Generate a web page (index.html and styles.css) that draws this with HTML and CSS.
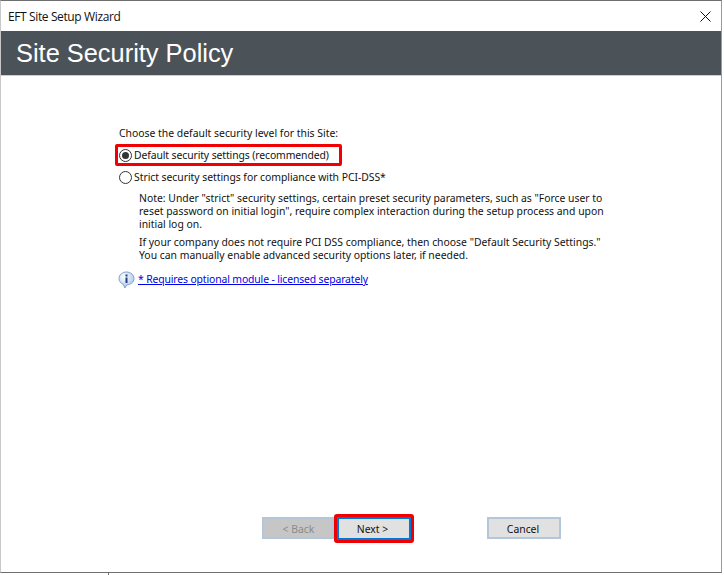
FILE: index.html
```html
<!DOCTYPE html>
<html lang="en">
<head>
<meta charset="utf-8">
<title>EFT Site Setup Wizard</title>
<link rel="stylesheet" href="styles.css">
</head>
<body>
<div class="window">
  <div class="titlebar">
    <span class="title">EFT Site Setup Wizard</span>
    <svg class="close" width="11" height="11" viewBox="0 0 11 11"><path d="M.5.5l10 10M10.5.5l-10 10" stroke="#111" stroke-width="1" fill="none"/></svg>
  </div>
  <div class="banner"><h1>Site Security Policy</h1></div>
  <main class="content">
    <p class="prompt">Choose the default security level for this Site:</p>
    <div class="option selected">
      <span class="radio checked"></span><span class="tight">Default security settings (recommended)</span>
    </div>
    <div class="option">
      <span class="radio"></span><span>Strict security settings for compliance with PCI-DSS*</span>
    </div>
    <div class="notes">
      <p>Note: Under "strict" security settings, certain preset security parameters, such as "Force user to<br>reset password on initial login", require complex interaction during the setup process and upon<br>initial log on.</p>
      <p>If your company does not require PCI DSS compliance, then choose "Default Security Settings."<br>You can manually enable advanced security options later, if needed.</p>
    </div>
    <div class="info">
      <svg class="info-icon" width="17" height="18" viewBox="0 0 17 18">
        <defs><radialGradient id="bubble" cx="35%" cy="30%" r="75%"><stop offset="0" stop-color="#ffffff"/><stop offset="1" stop-color="#a9c6ea"/></radialGradient></defs>
        <path d="M8.5 1C4.400 1 1 3.800 1 7.500c0 2.800 1.900 5 4.500 5.900L6.800 17l2-3.100c3.900-.2 7.200-2.900 7.200-6.400C16 3.800 12.600 1 8.500 1z" fill="url(#bubble)" stroke="#7f9fc6"/>
        <rect x="7.500" y="6.500" width="2" height="5.500" fill="#1d3f86"/>
        <rect x="7.500" y="3.500" width="2" height="2" fill="#1d3f86"/>
      </svg>
      <a class="info-link" href="#">* Requires optional module - licensed separately</a>
    </div>
  </main>
  <footer class="actions">
    <button class="btn btn-back" disabled>&lt; Back</button>
    <button class="btn btn-next">Next &gt;</button>
    <button class="btn btn-cancel">Cancel</button>
  </footer>
</div>
<div class="underlay"><span class="tick"></span></div>
</body>
</html>
```

FILE: styles.css
```css
html, body {
  margin: 0;
  padding: 0;
  background: #fff;
}
body {
  width: 724px;
  height: 575px;
  overflow: hidden;
  font-family: "Noto Sans", "DejaVu Sans", sans-serif;
  font-size: 10.4px;
  color: #111;
}
.window {
  box-sizing: border-box;
  width: 722px;
  height: 573px;
  border-top: 1px solid #6e6e6e;
  border-bottom: 1px solid #6e6e6e;
  border-right: 1px solid #9a9a9a;
  border-left: 1px solid #c8c8c8;
  display: flex;
  flex-direction: column;
  background: #fff;
}
.titlebar {
  height: 30px;
  flex: none;
  display: flex;
  align-items: center;
  justify-content: space-between;
  padding: 0 10px 0 7px;
}
.title {
  font-family: "Open Sans", "Noto Sans", sans-serif;
  font-size: 12px;
  letter-spacing: -0.38px;
  color: #111;
}
.close {
  display: block;
}
.banner {
  height: 45px;
  flex: none;
  box-sizing: border-box;
  background: #4b5359;
  border-bottom: 1px solid #c9ced2;
  display: flex;
  align-items: center;
  padding-left: 15px;
}
.banner h1 {
  margin: 0;
  font-family: "Liberation Sans", Arial, sans-serif;
  font-weight: normal;
  font-size: 25.4px;
  color: #fff;
}
.content {
  flex: 1;
  padding: 51px 0 0 117px;
  line-height: 13px;
}
.prompt {
  margin: 0 0 4px;
  height: 13px;
  padding-left: 1px;
}
.option {
  display: flex;
  align-items: center;
  gap: 2px;
  height: 22px;
  width: 222px;
  box-sizing: border-box;
  padding-left: 1px;
  white-space: nowrap;
  letter-spacing: -0.04px;
}
.option .tight {
  letter-spacing: -0.1px;
}
.option.selected {
  width: 227px;
  margin-left: -3px;
  border: 3px solid #f00000;
  border-radius: 2px;
  padding-left: 1px;
}
.radio {
  box-sizing: border-box;
  width: 13px;
  height: 13px;
  flex: none;
  border: 1px solid #333;
  border-radius: 50%;
  background: #fff;
  display: flex;
  align-items: center;
  justify-content: center;
}
.radio.checked::before {
  content: "";
  width: 7px;
  height: 7px;
  border-radius: 50%;
  background: #333;
}
.notes {
  margin-left: 21px;
  margin-top: 4px;
  width: 490px;
  white-space: nowrap;
}
.notes p {
  margin: 0 0 5px;
}
.info {
  display: flex;
  align-items: flex-end;
  margin-top: 9px;
  height: 18px;
}
.info-icon {
  display: block;
  flex: none;
}
.info-link {
  color: #0000e6;
  text-decoration: underline;
  padding-left: 3px;
  padding-bottom: 3px;
  letter-spacing: -0.13px;
}
.actions {
  flex: none;
  height: 55px;
  display: flex;
  align-items: flex-start;
  padding-left: 261px;
}
.btn {
  box-sizing: border-box;
  height: 22px;
  margin: 0;
  padding: 1px 0 0;
  font-family: inherit;
  font-size: 10.4px;
  color: #111;
  background: #e1e1e1;
  border: 2px solid #b3c6da;
}
.btn-back {
  width: 72px;
  padding-left: 1px;
  background: #c6c6c6;
  color: #8a8a8a;
}
.btn-next {
  width: 80px;
  height: 29px;
  margin-top: -3px;
  padding-right: 3px;
  border: 3px solid #f00000;
  border-radius: 3px;
  background: #e1e1e1;
  outline: 2px solid #0078d7;
  outline-offset: -5px;
}
.btn-cancel {
  width: 74px;
  margin-left: 73px;
  padding-right: 2px;
}
.underlay {
  height: 2px;
  padding-left: 108px;
}
.tick {
  display: block;
  width: 1px;
  height: 2px;
  background: #777;
}
```
